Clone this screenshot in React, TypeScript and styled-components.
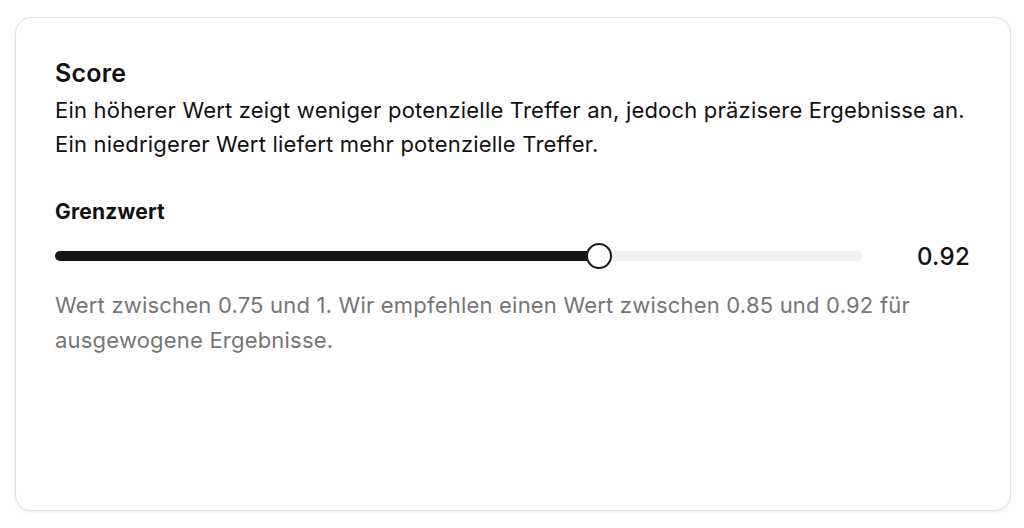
import React, { useState } from "react";
import styled, { createGlobalStyle } from "styled-components";

const GlobalStyle = createGlobalStyle`
  body {
    margin: 0;
    background: #ffffff;
    font-family: Inter, "Liberation Sans", Arial, sans-serif;
  }
`;

const MIN = 0.75;
const MAX = 1;
const THUMB = 26;

const App = () => {
  const [value, setValue] = useState(0.92);
  const pct = (value - MIN) / (MAX - MIN);
  // thumb travels inside the track, like a native range input
  const pos = `calc(${THUMB / 2}px + ${pct} * (100% - ${THUMB}px))`;

  return (
    <Page>
      <GlobalStyle />
      <Card>
        <Title>Score</Title>
        <Description>
          Ein höherer Wert zeigt weniger potenzielle Treffer an, jedoch präzisere Ergebnisse an.
          <br />
          Ein niedrigerer Wert liefert mehr potenzielle Treffer.
        </Description>
        <Label>Grenzwert</Label>
        <SliderRow>
          <Track>
            <Fill style={{ width: pos }} />
            <Thumb style={{ left: pos }} />
            <RangeInput
              type="range"
              min={MIN}
              max={MAX}
              step={0.01}
              value={value}
              onChange={(e: React.ChangeEvent<HTMLInputElement>) =>
                setValue(parseFloat(e.currentTarget.value))
              }
            />
          </Track>
          <Value>{value.toFixed(2)}</Value>
        </SliderRow>
        <Hint>
          Wert zwischen 0.75 und 1. Wir empfehlen einen Wert zwischen 0.85 und 0.92 für
          ausgewogene Ergebnisse.
        </Hint>
      </Card>
    </Page>
  );
};

const Page = styled.div`
  box-sizing: border-box;
  height: 528px;
  padding: 17px 13px 17px 15px;
`;

const Card = styled.div`
  box-sizing: border-box;
  height: 494px;
  border: 1px solid #e2e2e2;
  border-radius: 16px;
  box-shadow: 0 1px 3px rgba(0, 0, 0, 0.08);
  background: #ffffff;
  padding: 40px 40px 0 39px;
  color: #111111;
`;

const Title = styled.h2`
  margin: 0;
  font-size: 25px;
  font-weight: 600;
  line-height: 30px;
  letter-spacing: 0.2px;
`;

const Description = styled.p`
  margin: 5px 0 0;
  font-size: 22px;
  line-height: 34px;
  letter-spacing: 0.2px;
`;

const Label = styled.div`
  margin-top: 38px;
  font-size: 21px;
  font-weight: 700;
  line-height: 26px;
  letter-spacing: 0.2px;
`;

const SliderRow = styled.div`
  display: flex;
  align-items: center;
  margin-top: 13px;
  height: 36px;
`;

const Track = styled.div`
  position: relative;
  width: 807px;
  height: 10px;
  border-radius: 5px;
  background: #f1f1f1;
`;

const Fill = styled.div`
  height: 100%;
  border-radius: 5px;
  background: #161616;
`;

const Thumb = styled.div`
  position: absolute;
  top: 50%;
  width: ${THUMB}px;
  height: ${THUMB}px;
  box-sizing: border-box;
  border: 2px solid #1a1a1a;
  border-radius: 50%;
  background: #ffffff;
  transform: translate(-50%, -50%);
  pointer-events: none;
`;

const RangeInput = styled.input`
  position: absolute;
  inset: -12px 0;
  width: 100%;
  margin: 0;
  opacity: 0;
  cursor: pointer;
`;

const Value = styled.div`
  margin-left: auto;
  font-size: 24px;
  font-weight: 500;
  letter-spacing: 0.3px;
`;

const Hint = styled.p`
  margin: 14px 0 0;
  font-size: 22px;
  line-height: 35px;
  letter-spacing: 0.2px;
  color: #767676;
  max-width: 880px;
`;

export default App;
